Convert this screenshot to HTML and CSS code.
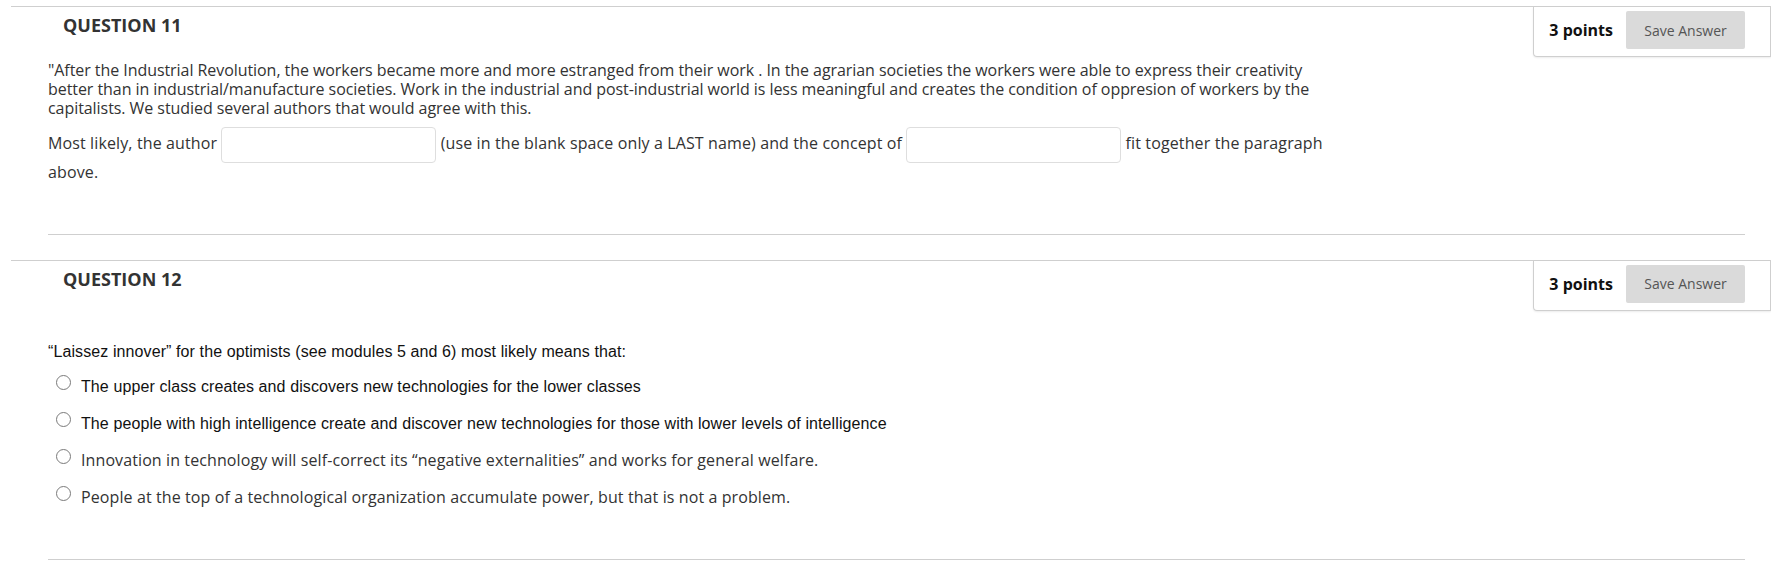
FILE: index.html
```html
<!DOCTYPE html>
<html>
<head>
	<meta charset="utf-8">
	<meta name="viewport" content="width=device-width,initial-scale=1.0">
	<title>Take Test</title>
	<link rel="stylesheet" href="styles.css">
</head>
<body>
	<main class="test">
		<!-- soal 11 : isian -->
		<section class="question">
			<div class="q-head">
				<h3 class="q-title">QUESTION 11</h3>
				<div class="points">
					<span class="points-val">3 points</span>
					<button class="save-btn">Save Answer</button>
				</div>
			</div>
			<div class="q-body">
				<div class="q-text">
					<p class="intro">"After the Industrial Revolution, the workers became more and more estranged from their work . In the agrarian societies the workers were able to express their creativity better than in industrial/manufacture societies. Work in the industrial and post-industrial world is less meaningful and creates the condition of oppresion of workers by the capitalists. We studied several authors that would agree with this.</p>
					<p class="fill">Most likely, the author <input class="blank" type="text"> (use in the blank space only a LAST name) and the concept of <input class="blank" type="text"> fit together the paragraph above.</p>
				</div>
			</div>
		</section>

		<!-- soal 12 : pilihan ganda -->
		<section class="question">
			<div class="q-head">
				<h3 class="q-title">QUESTION 12</h3>
				<div class="points">
					<span class="points-val">3 points</span>
					<button class="save-btn">Save Answer</button>
				</div>
			</div>
			<div class="q-body">
				<p class="stem">&ldquo;Laissez innover&rdquo; for the optimists (see modules 5 and 6) most likely means that:</p>
				<ul class="choices">
					<li class="arial"><input type="radio" name="q12"><span>The upper class creates and discovers new technologies for the lower classes</span></li>
					<li class="arial"><input type="radio" name="q12"><span>The people with high intelligence create and discover new technologies for those with lower levels of intelligence</span></li>
					<li><input type="radio" name="q12"><span>Innovation in technology will self-correct its &ldquo;negative externalities&rdquo; and works for general welfare.</span></li>
					<li><input type="radio" name="q12"><span>People at the top of a technological organization accumulate power, but that is not a problem.</span></li>
				</ul>
			</div>
		</section>
	</main>
</body>
</html>
```

FILE: styles.css
```css
* {
	margin: 0;
	padding: 0;
	box-sizing: border-box;
}
body {
	font-family: "Open Sans", Arial, sans-serif;
	font-size: 16px;
	color: #333;
	background: #fff;
}

.test {
	padding: 6px 0 0 11px;
}
.question {
	border-top: 1px solid #cfcfcf;
}
.question + .question {
	margin-top: 25px;
}

/* judul soal + kotak poin */
.q-head {
	display: flex;
	align-items: flex-start;
}
.q-title {
	margin: 6px 0 0 52px;
	font-size: 18px;
	line-height: 24px;
	font-weight: bold;
	color: #333;
}
.points {
	margin-left: auto;
	display: flex;
	align-items: center;
	gap: 13px;
	padding: 4px 25px 7px 15px;
	border: 1px solid #cfcfcf;
	border-top: 0;
	border-radius: 0 0 0 4px;
	box-shadow: 0 1px 2px rgba(0,0,0,.08);
}
.points-val {
	font-weight: bold;
	color: #111;
	line-height: 20px;
}
.save-btn {
	width: 119px;
	height: 38px;
	border: 0;
	border-radius: 2px;
	background: #dadada;
	color: #555;
	font-family: "Open Sans", Arial, sans-serif;
	font-size: 14px;
}
button:focus {
	outline: none;
}

/* isi soal */
.q-body {
	margin: 0 26px 0 37px;
	padding: 4px 0 52px;
	border-bottom: 1px solid #cfcfcf;
}
.q-text {
	max-width: 1302px;
	line-height: 1.2;
}
.q-text .intro {
	letter-spacing: -0.06px;
}
.q-text .fill {
	margin-top: 8px;
	letter-spacing: 0.12px;
}
.blank {
	width: 215px;
	height: 36px;
	vertical-align: middle;
	border: 1px solid #dedede;
	border-radius: 4px;
	background: #fff;
	font-family: inherit;
	font-size: 16px;
}

.stem {
	margin-top: 27px;
	font-family: "Liberation Sans", Arial, sans-serif;
	line-height: 1.2;
	letter-spacing: 0.1px;
	color: #111;
}
.choices {
	list-style: none;
	margin-top: 16px;
	padding-left: 8px;
}
.choices li {
	display: flex;
	align-items: flex-start;
	line-height: 1.2;
	letter-spacing: 0.1px;
}
.choices li + li {
	margin-top: 17.8px;
}
.choices li.arial {
	font-family: "Liberation Sans", Arial, sans-serif;
	color: #111;
}
.choices input[type=radio] {
	appearance: none;
	flex: none;
	width: 15px;
	height: 15px;
	margin: -2px 10px 0 0;
	border: 1px solid #7a7a7a;
	border-radius: 50%;
	background: #fff;
}
```
